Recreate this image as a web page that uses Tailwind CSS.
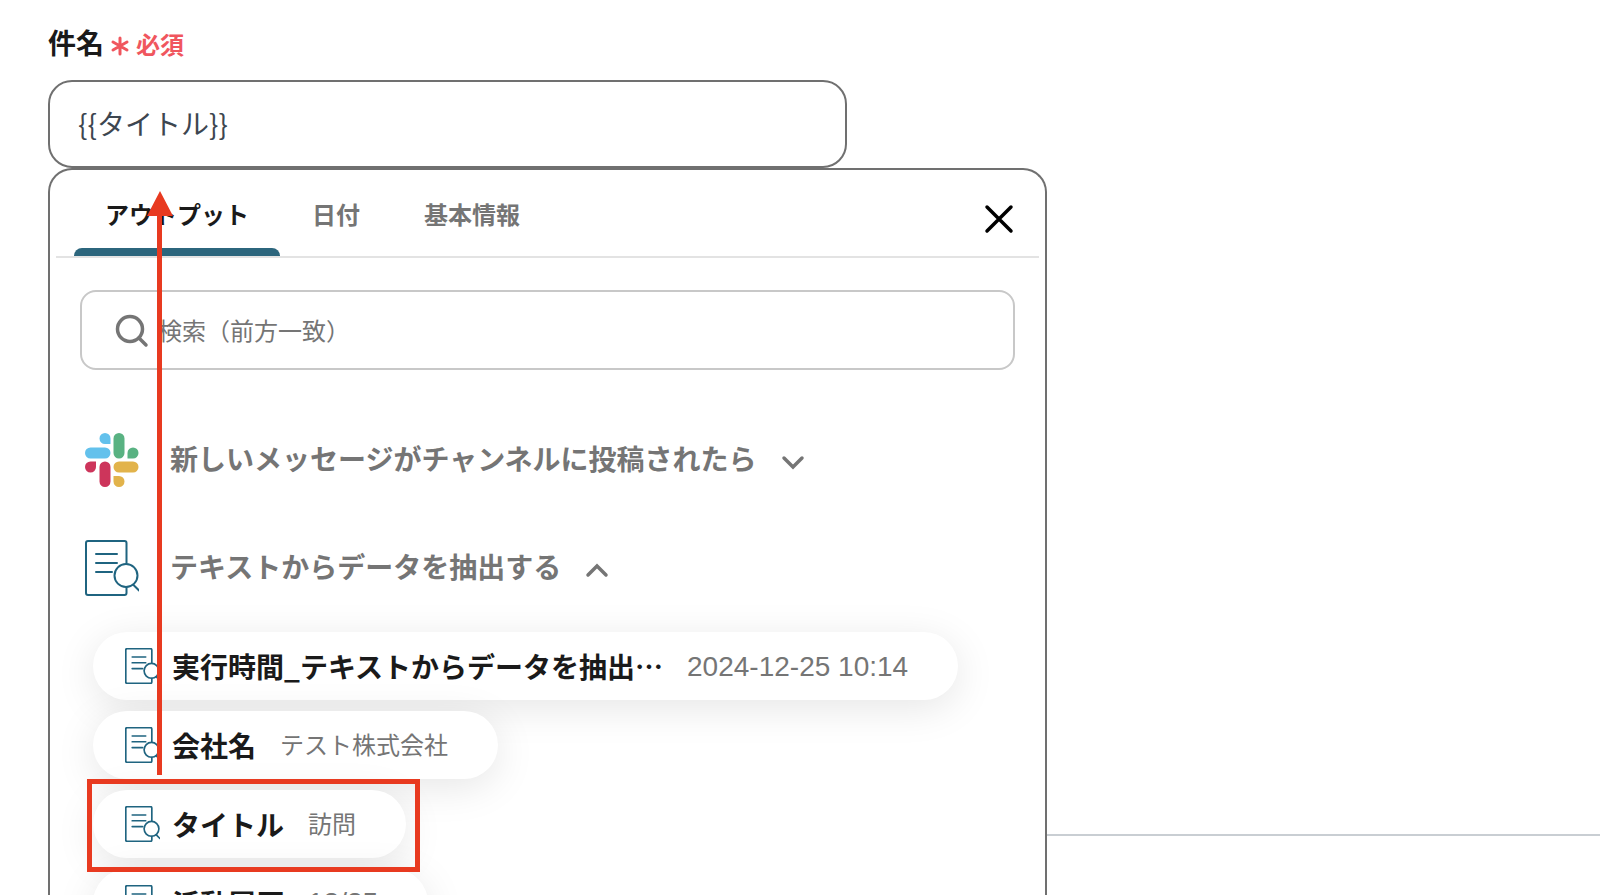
<!DOCTYPE html>
<html lang="ja">
  <head>
    <meta charset="UTF-8" />
    <title>件名</title>
    <script src="https://cdn.jsdelivr.net/npm/@tailwindcss/browser@4"></script>
  </head>
  <body class="relative h-screen overflow-hidden bg-white font-['Liberation_Sans','Noto_Sans_CJK_JP',sans-serif] text-[28px] leading-10 text-[#1a1a1a]">

    <svg class="hidden">
      <symbol id="doc-search" viewBox="0 0 54 56" fill="none" stroke="currentColor" stroke-linecap="round" stroke-linejoin="round">
        <path d="M41.500 23V3a2 2 0 0 0-2-2H3a2 2 0 0 0-2 2v50a2 2 0 0 0 2 2h36.500a2 2 0 0 0 2-2v-6" />
        <path d="M11 14h21M11 23h21M11 32h16" />
        <circle cx="41" cy="35.500" r="11.500" />
        <path d="m48.500 45 5.500 5.500" />
      </symbol>
    </svg>

    <!-- page divider beside the panel -->
    <div class="absolute left-[1046px] right-0 top-[834px] border-t-2 border-[#c9ced3]"></div>

    <main class="relative h-full pl-12 pt-[22px] flex flex-col items-start">
      <label for="subject" class="h-10 mb-[18px] flex items-center font-bold font-['Noto_Sans_CJK_JP',sans-serif]">
        件名
        <span class="ml-1.5 pt-1 flex items-center gap-1.5 text-2xl text-[#f0565e]">
          <svg class="size-5 mt-1" viewBox="0 0 20 20" stroke="currentColor" stroke-width="3" stroke-linecap="round"><path d="M10 2v16M3 6l14 8M17 6 3 14" /></svg>
          必須
        </span>
      </label>
      <input id="subject" type="text" value="{{タイトル}}" class="w-[799px] h-[88px] shrink-0 px-7 pb-0.5 rounded-3xl border-2 border-[#707070] text-[#3d4650] font-['Noto_Sans_CJK_JP',sans-serif]" />

      <section class="w-[999px] flex-1 min-h-0 overflow-hidden px-1.5 bg-white rounded-t-3xl border-2 border-b-0 border-[#707070]">
        <div class="h-[88px] pl-[18px] pr-5 flex items-stretch justify-between border-b-2 border-[#e3e3e3]">
          <nav class="flex text-2xl font-bold text-[#757575]">
            <button class="w-[206px] flex flex-col items-center justify-between pt-7 text-[#1a1a1a]">
              <span class="leading-9">アウトプット</span>
              <span class="w-full h-2 rounded-t-lg bg-[#2c667d]"></span>
            </button>
            <button class="w-28 pt-7 flex justify-center leading-9">日付</button>
            <button class="w-40 pt-7 flex justify-center leading-9">基本情報</button>
          </nav>
          <button aria-label="閉じる" class="w-10 pt-3 flex items-center justify-center text-black">
            <svg class="size-8" viewBox="0 0 32 32" stroke="currentColor" stroke-width="3.500" stroke-linecap="round"><path d="m4 4 24 24M28 4 4 28" /></svg>
          </button>
        </div>

        <div class="px-6 pt-8">
          <label class="h-20 pl-8 flex items-center rounded-2xl border-2 border-[#c8c8c8]">
            <svg class="size-9 mr-2 shrink-0 text-[#757575]" viewBox="0 0 36 36" fill="none" stroke="currentColor" stroke-width="3.500" stroke-linecap="round"><circle cx="16" cy="17" r="12.500" /><path d="m25 26 7 7" /></svg>
            <input type="text" aria-label="検索" placeholder="検索（前方一致）" class="flex-1 h-full pt-1 text-2xl outline-none placeholder:text-[#757575]" />
          </label>

          <button class="mt-14 ml-[5px] h-[68px] flex items-center font-bold text-[#757575]">
            <svg class="size-[54px] mr-[31px]" viewBox="0 0 54 54">
              <path fill="#63c1ec" d="M20 0a5.500 5.500 0 0 1 5.500 5.500V11H20a5.500 5.500 0 0 1 0-11zM5.500 14.500H20a5.500 5.500 0 0 1 0 11H5.500a5.500 5.500 0 0 1 0-11z" />
              <path fill="#59b282" d="M34 0a5.500 5.500 0 0 1 5.500 5.500V20a5.500 5.500 0 0 1-11 0V5.500A5.500 5.500 0 0 1 34 0zM48 14.500a5.500 5.500 0 0 1 0 11h-5.500V20a5.500 5.500 0 0 1 5.500-5.500z" />
              <path fill="#e2b34b" d="M34 28.500h14a5.500 5.500 0 0 1 0 11H34a5.500 5.500 0 0 1 0-11zM28.500 43H34a5.500 5.500 0 1 1-5.500 5.500z" />
              <path fill="#cd355b" d="M5.500 28.500H11V34a5.500 5.500 0 1 1-5.500-5.500zM20 28.500a5.500 5.500 0 0 1 5.500 5.500v14.500a5.500 5.500 0 0 1-11 0V34a5.500 5.500 0 0 1 5.500-5.500z" />
            </svg>
            <span class="pt-0.5">新しいメッセージがチャンネルに投稿されたら</span>
            <svg class="w-6 h-4 ml-6 mt-1" viewBox="0 0 24 16" fill="none" stroke="currentColor" stroke-width="3.500" stroke-linecap="round"><path d="m3 4 9 9 9-9" /></svg>
          </button>

          <button class="mt-10 ml-[5px] h-[68px] flex items-center font-bold text-[#757575]">
            <svg class="w-[54px] h-14 mr-[31px] overflow-visible text-[#1f6480] stroke-2"><use href="#doc-search" /></svg>
            <span class="pt-0.5">テキストからデータを抽出する</span>
            <svg class="w-6 h-4 ml-6 mt-1" viewBox="0 0 24 16" fill="none" stroke="currentColor" stroke-width="3.500" stroke-linecap="round"><path d="m3 13 9-9 9 9" /></svg>
          </button>

          <ul class="mt-[30px] ml-[13px] flex flex-col items-start gap-[11px]">
            <li><button class="h-[68px] pl-8 pr-[50px] flex items-center rounded-full bg-white shadow-[0_8px_40px_rgba(0,0,0,0.1)]">
              <svg class="w-[35px] h-9 mr-3 overflow-visible text-[#1f6480] stroke-[2.6]"><use href="#doc-search" /></svg>
              <b class="font-['Noto_Sans_CJK_JP',sans-serif]">実行時間_テキストからデータを抽出…</b>
              <span class="ml-6 pt-0.5 text-[#757575]">2024-12-25 10:14</span>
            </button></li>
            <li><button class="h-[68px] pl-8 pr-[50px] flex items-center rounded-full bg-white shadow-[0_8px_40px_rgba(0,0,0,0.1)]">
              <svg class="w-[35px] h-9 mr-3 overflow-visible text-[#1f6480] stroke-[2.6]"><use href="#doc-search" /></svg>
              <b class="font-['Noto_Sans_CJK_JP',sans-serif]">会社名</b>
              <span class="ml-6 pt-0.5 text-2xl text-[#757575]">テスト株式会社</span>
            </button></li>
            <li><button class="h-[68px] pl-8 pr-[50px] flex items-center rounded-full bg-white shadow-[0_8px_40px_rgba(0,0,0,0.1)]">
              <svg class="w-[35px] h-9 mr-3 overflow-visible text-[#1f6480] stroke-[2.6]"><use href="#doc-search" /></svg>
              <b class="font-['Noto_Sans_CJK_JP',sans-serif]">タイトル</b>
              <span class="ml-6 pt-0.5 text-2xl text-[#757575]">訪問</span>
            </button></li>
            <li><button class="h-[68px] pl-8 pr-[50px] flex items-center rounded-full bg-white shadow-[0_8px_40px_rgba(0,0,0,0.1)]">
              <svg class="w-[35px] h-9 mr-3 overflow-visible text-[#1f6480] stroke-[2.6]"><use href="#doc-search" /></svg>
              <b class="font-['Noto_Sans_CJK_JP',sans-serif]">活動履歴</b>
              <span class="ml-6 text-[#757575]">12/25</span>
            </button></li>
          </ul>
        </div>
      </section>
    </main>

    <!-- annotations: highlighted item and arrow to the input -->
    <div class="absolute left-[87px] top-[779px] w-[333px] h-[93px] border-5 border-[#e83a20]"></div>
    <svg class="absolute left-[147px] top-[191px] w-[26px] h-[584px]" viewBox="0 0 26 584" fill="#e83a20"><path d="M13 0 26 25H15v559h-5V25H0z" /></svg>
  </body>
</html>
